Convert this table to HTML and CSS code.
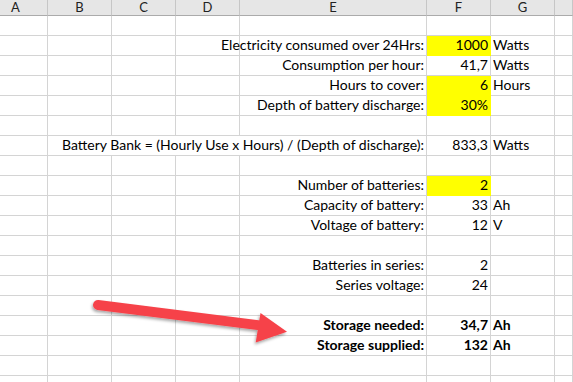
FILE: index.html
```html
<!DOCTYPE html>
<html>
<head>
<meta charset="utf-8">
<link rel="stylesheet" href="styles.css">
</head>
<body>
<div class="sheet">
  <div class="grid">
    <div class="hd">A</div><div class="hd">B</div><div class="hd">C</div><div class="hd">D</div><div class="hd">E</div><div class="hd">F</div><div class="hd">G</div><div class="hd"></div>

    <div class="c"></div><div class="c"></div><div class="c"></div><div class="c"></div><div class="c"></div><div class="c"></div><div class="c"></div><div class="c"></div>

    <div class="c"></div><div class="c"></div><div class="c"></div><div class="c"></div><div class="c r">Electricity consumed over 24Hrs:</div><div class="c r y">1000</div><div class="c">Watts</div><div class="c"></div>

    <div class="c"></div><div class="c"></div><div class="c"></div><div class="c"></div><div class="c r">Consumption per hour:</div><div class="c r">41,7</div><div class="c">Watts</div><div class="c"></div>

    <div class="c"></div><div class="c"></div><div class="c"></div><div class="c"></div><div class="c r">Hours to cover:</div><div class="c r y">6</div><div class="c">Hours</div><div class="c"></div>

    <div class="c"></div><div class="c"></div><div class="c"></div><div class="c"></div><div class="c r">Depth of battery discharge:</div><div class="c r y">30%</div><div class="c"></div><div class="c"></div>

    <div class="c"></div><div class="c"></div><div class="c"></div><div class="c"></div><div class="c"></div><div class="c"></div><div class="c"></div><div class="c"></div>

    <div class="c"></div><div class="c r span4">Battery Bank = (Hourly Use x Hours) / (Depth of discharge):</div><div class="c r">833,3</div><div class="c">Watts</div><div class="c"></div>

    <div class="c"></div><div class="c"></div><div class="c"></div><div class="c"></div><div class="c"></div><div class="c"></div><div class="c"></div><div class="c"></div>

    <div class="c"></div><div class="c"></div><div class="c"></div><div class="c"></div><div class="c r">Number of batteries:</div><div class="c r y">2</div><div class="c"></div><div class="c"></div>

    <div class="c"></div><div class="c"></div><div class="c"></div><div class="c"></div><div class="c r">Capacity of battery:</div><div class="c r">33</div><div class="c">Ah</div><div class="c"></div>

    <div class="c"></div><div class="c"></div><div class="c"></div><div class="c"></div><div class="c r">Voltage of battery:</div><div class="c r">12</div><div class="c">V</div><div class="c"></div>

    <div class="c"></div><div class="c"></div><div class="c"></div><div class="c"></div><div class="c"></div><div class="c"></div><div class="c"></div><div class="c"></div>

    <div class="c"></div><div class="c"></div><div class="c"></div><div class="c"></div><div class="c r">Batteries in series:</div><div class="c r">2</div><div class="c"></div><div class="c"></div>

    <div class="c"></div><div class="c"></div><div class="c"></div><div class="c"></div><div class="c r">Series voltage:</div><div class="c r">24</div><div class="c"></div><div class="c"></div>

    <div class="c"></div><div class="c"></div><div class="c"></div><div class="c"></div><div class="c"></div><div class="c"></div><div class="c"></div><div class="c"></div>

    <div class="c"></div><div class="c"></div><div class="c"></div><div class="c"></div><div class="c r b">Storage needed:</div><div class="c r b">34,7</div><div class="c b">Ah</div><div class="c"></div>

    <div class="c"></div><div class="c"></div><div class="c"></div><div class="c"></div><div class="c r b">Storage supplied:</div><div class="c r b">132</div><div class="c b">Ah</div><div class="c"></div>

    <div class="c"></div><div class="c"></div><div class="c"></div><div class="c"></div><div class="c"></div><div class="c"></div><div class="c"></div><div class="c"></div>

    <div class="c"></div><div class="c"></div><div class="c"></div><div class="c"></div><div class="c"></div><div class="c"></div><div class="c"></div><div class="c"></div>
  </div>
  <svg class="arrow" width="573" height="382" viewBox="0 0 573 382">
    <defs>
      <filter id="sh" x="-20%" y="-50%" width="140%" height="200%">
        <feDropShadow dx="-1" dy="2" stdDeviation="1.6" flood-color="#000" flood-opacity="0.35"/>
      </filter>
    </defs>
    <g filter="url(#sh)" fill="#f6434a" stroke="#f6434a">
      <line x1="98" y1="305" x2="262" y2="325.6" stroke-width="10" stroke-linecap="round"/>
      <polygon points="260.5,313 287,331.7 255.7,342.5" stroke="none"/>
    </g>
  </svg>
</div>
</body>
</html>
```

FILE: styles.css
```css
html, body {
  margin: 0;
  padding: 0;
  background: #ffffff;
}
.sheet {
  position: relative;
  width: 573px;
  height: 382px;
  overflow: hidden;
}
.grid {
  display: grid;
  margin-left: -16px;
  grid-template-columns: 64px 64px 64px 64px 187px 64px 64px 1fr;
  grid-template-rows: 16px;
  grid-auto-rows: 20px;
  font-family: "Lato", "Liberation Sans", sans-serif;
  font-size: 14px;
  color: #000;
}
.hd {
  box-sizing: border-box;
  background: #e6e6e6;
  border-right: 1px solid #c6c6c6;
  border-bottom: 1px solid #ababab;
  display: flex;
  align-items: center;
  justify-content: center;
  font-size: 13px;
  color: #222;
  line-height: 15px;
}
.c {
  box-sizing: border-box;
  border-right: 1px solid #d4d4d4;
  border-bottom: 1px solid #d4d4d4;
  display: flex;
  align-items: flex-end;
  padding: 0 2px 2px 2px;
  line-height: 17px;
  white-space: nowrap;
}
.r {
  justify-content: flex-end;
}
.y {
  background: #ffff00;
  border-right-color: #ffff00;
  border-bottom-color: #ffff00;
}
.b {
  font-weight: bold;
}
.span4 {
  grid-column: span 4;
}
.arrow {
  position: absolute;
  left: 0;
  top: 0;
}
```
